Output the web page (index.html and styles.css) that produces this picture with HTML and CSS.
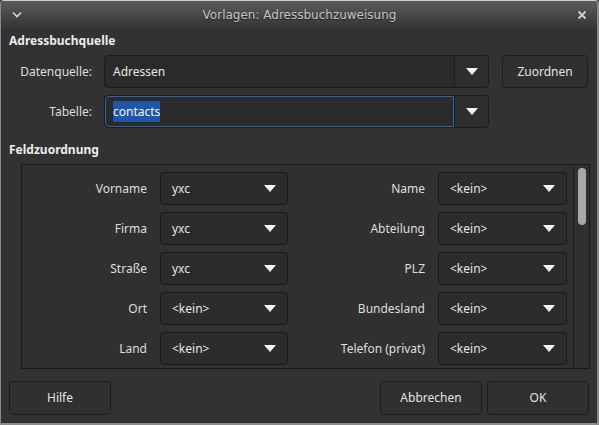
FILE: index.html
```html
<!DOCTYPE html>
<html lang="de">
<head>
<meta charset="utf-8">
<title>Vorlagen: Adressbuchzuweisung</title>
<link rel="stylesheet" href="styles.css">
</head>
<body>
<div class="window">
  <div class="titlebar">
    <svg class="tb-menu" width="10" height="7" viewBox="0 0 10 7"><path d="M1 1.5 L5 5.5 L9 1.5" fill="none" stroke="#d8d8d8" stroke-width="1.6"/></svg>
    <div class="tb-title">Vorlagen: Adressbuchzuweisung</div>
    <svg class="tb-close" width="10" height="10" viewBox="0 0 10 10"><path d="M1.5 1.5 L8.5 8.5 M8.5 1.5 L1.5 8.5" fill="none" stroke="#d0d0d0" stroke-width="1.8"/></svg>
  </div>
  <div class="content">
    <div class="heading">Adressbuchquelle</div>
    <div class="source-grid">
      <div class="lbl">Datenquelle:</div>
      <div class="combo wide"><div class="entry">Adressen</div><div class="drop"><span class="arrow"></span></div></div>
      <div class="btn">Zuordnen</div>
      <div class="lbl">Tabelle:</div>
      <div class="combo wide"><div class="entry focused"><span class="sel">contacts</span></div><div class="drop"><span class="arrow"></span></div></div>
    </div>
    <div class="heading h2">Feldzuordnung</div>
    <div class="frame">
      <div class="fields">
        <div class="flbl">Vorname</div><div class="fcombo"><span>yxc</span><span class="arrow"></span></div>
        <div class="flbl">Name</div><div class="fcombo"><span>&lt;kein&gt;</span><span class="arrow"></span></div>
        <div class="flbl">Firma</div><div class="fcombo"><span>yxc</span><span class="arrow"></span></div>
        <div class="flbl">Abteilung</div><div class="fcombo"><span>&lt;kein&gt;</span><span class="arrow"></span></div>
        <div class="flbl">Straße</div><div class="fcombo"><span>yxc</span><span class="arrow"></span></div>
        <div class="flbl">PLZ</div><div class="fcombo"><span>&lt;kein&gt;</span><span class="arrow"></span></div>
        <div class="flbl">Ort</div><div class="fcombo"><span>&lt;kein&gt;</span><span class="arrow"></span></div>
        <div class="flbl">Bundesland</div><div class="fcombo"><span>&lt;kein&gt;</span><span class="arrow"></span></div>
        <div class="flbl">Land</div><div class="fcombo"><span>&lt;kein&gt;</span><span class="arrow"></span></div>
        <div class="flbl">Telefon (privat)</div><div class="fcombo"><span>&lt;kein&gt;</span><span class="arrow"></span></div>
      </div>
      <div class="scrollbar"><div class="thumb"></div></div>
    </div>
    <div class="buttons">
      <div class="btn bbtn">Hilfe</div>
      <div class="spacer"></div>
      <div class="btn bbtn">Abbrechen</div>
      <div class="btn bbtn">OK</div>
    </div>
  </div>
</div>
</body>
</html>
```
FILE: styles.css
```css
* { box-sizing: border-box; }
html, body { margin: 0; padding: 0; background: #323232; }
body { font-family: "Noto Sans", "DejaVu Sans", sans-serif; font-size: 12px; color: #e3e3e3; }
.window {
  width: 599px; height: 425px; background: #323232;
  border-left: 1px solid #8a8a8a; border-right: 2px solid #8a8a8a; border-bottom: 2px solid #8a8a8a;
  border-top: 1px solid #c9c9c9; border-radius: 4px 4px 0 0;
  display: flex; flex-direction: column; overflow: hidden;
}
.titlebar {
  height: 29px; flex: none; display: flex; align-items: center;
  background: linear-gradient(#5c5c5c, #3a3a3a 80%, #333333);
  padding: 0 10px 0 11px;
}
.tb-menu { flex: none; margin-top: -2px; }
.tb-title { flex: 1; text-align: center; color: #c4c4c4; font-family: "DejaVu Sans", sans-serif; font-size: 12px; text-shadow: 0 1px 1px #222; margin-top: -2px; }
.tb-close { flex: none; margin-top: -2px; }
.content { flex: 1; padding: 2px 8px 0 8px; display: flex; flex-direction: column; }
.heading { font-weight: bold; height: 18px; line-height: 18px; margin-bottom: 5px; color: #ececec; }
.h2 { margin-top: 13px; margin-bottom: 5px; }
.source-grid {
  display: grid; grid-template-columns: 83px 385px 87px; column-gap: 12px; row-gap: 7px;
  grid-template-rows: 33px 33px;
}
.source-grid .btn { margin-left: 1px; }
.lbl { text-align: right; line-height: 33px; color: #dedede; }
.combo { display: flex; border: 1px solid #1c1c1c; border-radius: 4px; background: #2a2a2a; overflow: hidden; }
.entry { flex: 1; padding-left: 8px; line-height: 31px; color: #e6e6e6; }
.entry.focused { border: 1px solid #2a64b3; border-radius: 4px 0 0 4px; line-height: 29px; padding-left: 7px; }
.sel { background: #1f56a8; color: #f2f2f2; padding: 2px 0; }
.drop { width: 34px; flex: none; border-left: 1px solid #1c1c1c; background: #2e2e2e; display: flex; align-items: center; justify-content: center; }
.arrow { width: 0; height: 0; border-left: 6px solid transparent; border-right: 6px solid transparent; border-top: 7px solid #f4f4f4; display: inline-block; }
.btn { border: 1px solid #1c1c1c; border-radius: 4px; background: #303030; text-align: center; line-height: 31px; color: #e3e3e3; }
.frame {
  margin-left: 12px; width: 569px; height: 205px; border: 1px solid #1a1a1a; display: flex; background: #303030;
}
.fields {
  width: 553px; padding-top: 7px;
  display: grid; grid-template-columns: 125px 128px 124px 129px; grid-template-rows: repeat(5, 33px);
  column-gap: 13px; row-gap: 7px; align-content: start;
}
.flbl { text-align: right; line-height: 33px; color: #dedede; white-space: nowrap; }
.fcombo { border: 1px solid #1a1a1a; border-radius: 4px; background: #2c2c2c; display: flex; align-items: center; justify-content: space-between; padding: 0 11px 0 11px; color: #e6e6e6; }
.scrollbar { flex: 1; border-left: 1px solid #1e1e1e; padding: 3px 3px 0 3px; }
.thumb { width: 8px; height: 57px; border-radius: 4px; background: #a7a7a7; margin-left: 1px; }
.buttons { display: flex; margin-top: 12px; gap: 5px; }
.bbtn { width: 102px; height: 34px; line-height: 32px; }
.spacer { flex: 1; }
```
